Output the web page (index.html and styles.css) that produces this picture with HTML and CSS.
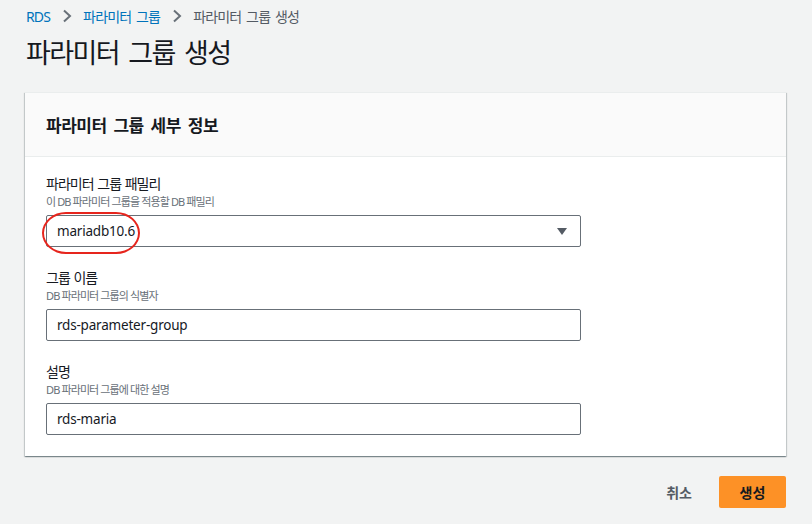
FILE: index.html
```html
<!DOCTYPE html>
<html lang="ko">
<head>
  <meta charset="UTF-8">
  <meta name="viewport" content="width=device-width, initial-scale=1">
  <title>파라미터 그룹 생성</title>
  <link rel="stylesheet" href="styles.css">
</head>
<body>
  <nav class="breadcrumb">
    <a href="#">RDS</a>
    <svg class="chev" viewBox="0 0 10 14" width="10" height="14"><path d="M2 1.5 L8 7 L2 12.5" fill="none" stroke="#687078" stroke-width="2"/></svg>
    <a href="#">파라미터 그룹</a>
    <svg class="chev" viewBox="0 0 10 14" width="10" height="14"><path d="M2 1.5 L8 7 L2 12.5" fill="none" stroke="#687078" stroke-width="2"/></svg>
    <span class="current">파라미터 그룹 생성</span>
  </nav>

  <h1>파라미터 그룹 생성</h1>

  <section class="card">
    <div class="card-header">
      <h2>파라미터 그룹 세부 정보</h2>
    </div>
    <div class="card-body">
      <div class="field">
        <div class="label">파라미터 그룹 패밀리</div>
        <div class="desc">이 DB 파라미터 그룹을 적용할 DB 패밀리</div>
        <div class="select">
          <span>mariadb10.6</span>
          <span class="arrow"></span>
          <span class="mark"></span>
        </div>
      </div>
      <div class="field">
        <div class="label">그룹 이름</div>
        <div class="desc">DB 파라미터 그룹의 식별자</div>
        <div class="input">rds-parameter-group</div>
      </div>
      <div class="field">
        <div class="label">설명</div>
        <div class="desc">DB 파라미터 그룹에 대한 설명</div>
        <div class="input">rds-maria</div>
      </div>
    </div>
  </section>

  <div class="actions">
    <button class="btn-link">취소</button>
    <button class="btn-primary">생성</button>
  </div>
</body>
</html>
```

FILE: styles.css
```css
/* base */
* { box-sizing: border-box; margin: 0; padding: 0; }
body {
  font-family: "Noto Sans", "Noto Sans CJK KR", sans-serif;
  background: #f2f3f3;
  color: #16191f;
  padding: 0 26px 0 25px;
  width: 812px;
}

/* breadcrumb */
.breadcrumb {
  display: flex;
  align-items: center;
  height: 32px;
  padding-left: 1px;
  font-size: 14px;
  letter-spacing: -0.06em;
  word-spacing: 2px;
}
.breadcrumb a {
  color: #0073bb;
  text-decoration: none;
}
.breadcrumb .chev {
  margin: 0 11px 0 12px;
}
.breadcrumb .current {
  color: #545b64;
}

h1 {
  font-size: 27px;
  font-weight: 400;
  letter-spacing: -0.06em;
  word-spacing: 4px;
  line-height: 42px;
  padding-left: 1px;
  height: 60px;
}

/* card */
.card {
  background: #fff;
  box-shadow: 0 1px 1px 0 rgba(0,28,36,.3), 1px 1px 1px 0 rgba(0,28,36,.15), -1px 1px 1px 0 rgba(0,28,36,.15);
  border-top: 1px solid #eaeded;
}
.card-header {
  background: #fafafa;
  height: 64px;
  display: flex;
  align-items: center;
  padding: 0 21px;
  border-bottom: 1px solid #eaeded;
}
.card-header h2 {
  font-size: 17px;
  font-weight: 700;
  letter-spacing: -0.03em;
  word-spacing: 3px;
}
.card-body {
  padding: 17px 21px 21px;
}
.field + .field {
  margin-top: 21px;
}
.label {
  font-size: 14px;
  line-height: 20px;
  letter-spacing: -0.07em;
  word-spacing: 1px;
}
.desc {
  font-size: 11px;
  line-height: 16px;
  color: #687078;
  letter-spacing: -0.08em;
}

.select,
.input {
  position: relative;
  width: 535px;
  height: 32px;
  margin-top: 5px;
  border: 1px solid #687078;
  border-radius: 2px;
  padding: 0 10px;
  display: flex;
  align-items: center;
  font-size: 13.5px;
  letter-spacing: -0.2px;
  color: #16191f;
}
.select .arrow {
  position: absolute;
  right: 13px;
  top: 12px;
  width: 0;
  height: 0;
  border-left: 5px solid transparent;
  border-right: 5px solid transparent;
  border-top: 7px solid #545b64;
}
/* 빨간 표시 */
.select .mark {
  position: absolute;
  left: -5px;
  top: -4px;
  width: 98px;
  height: 42px;
  border: 2px solid #e6251d;
  border-radius: 24px / 21px;
}

/* buttons */
.actions {
  display: flex;
  justify-content: flex-end;
  align-items: center;
  margin-top: 20px;
}
.actions button {
  font-family: inherit;
  font-size: 14px;
  font-weight: 700;
  border: none;
  cursor: pointer;
}
.btn-link {
  background: none;
  color: #545b64;
  padding: 0 27px 0 20px;
  height: 32px;
}
.btn-primary {
  background: #fd9126;
  color: #16191f;
  border-radius: 2px;
  width: 67px;
  height: 32px;
}
```
